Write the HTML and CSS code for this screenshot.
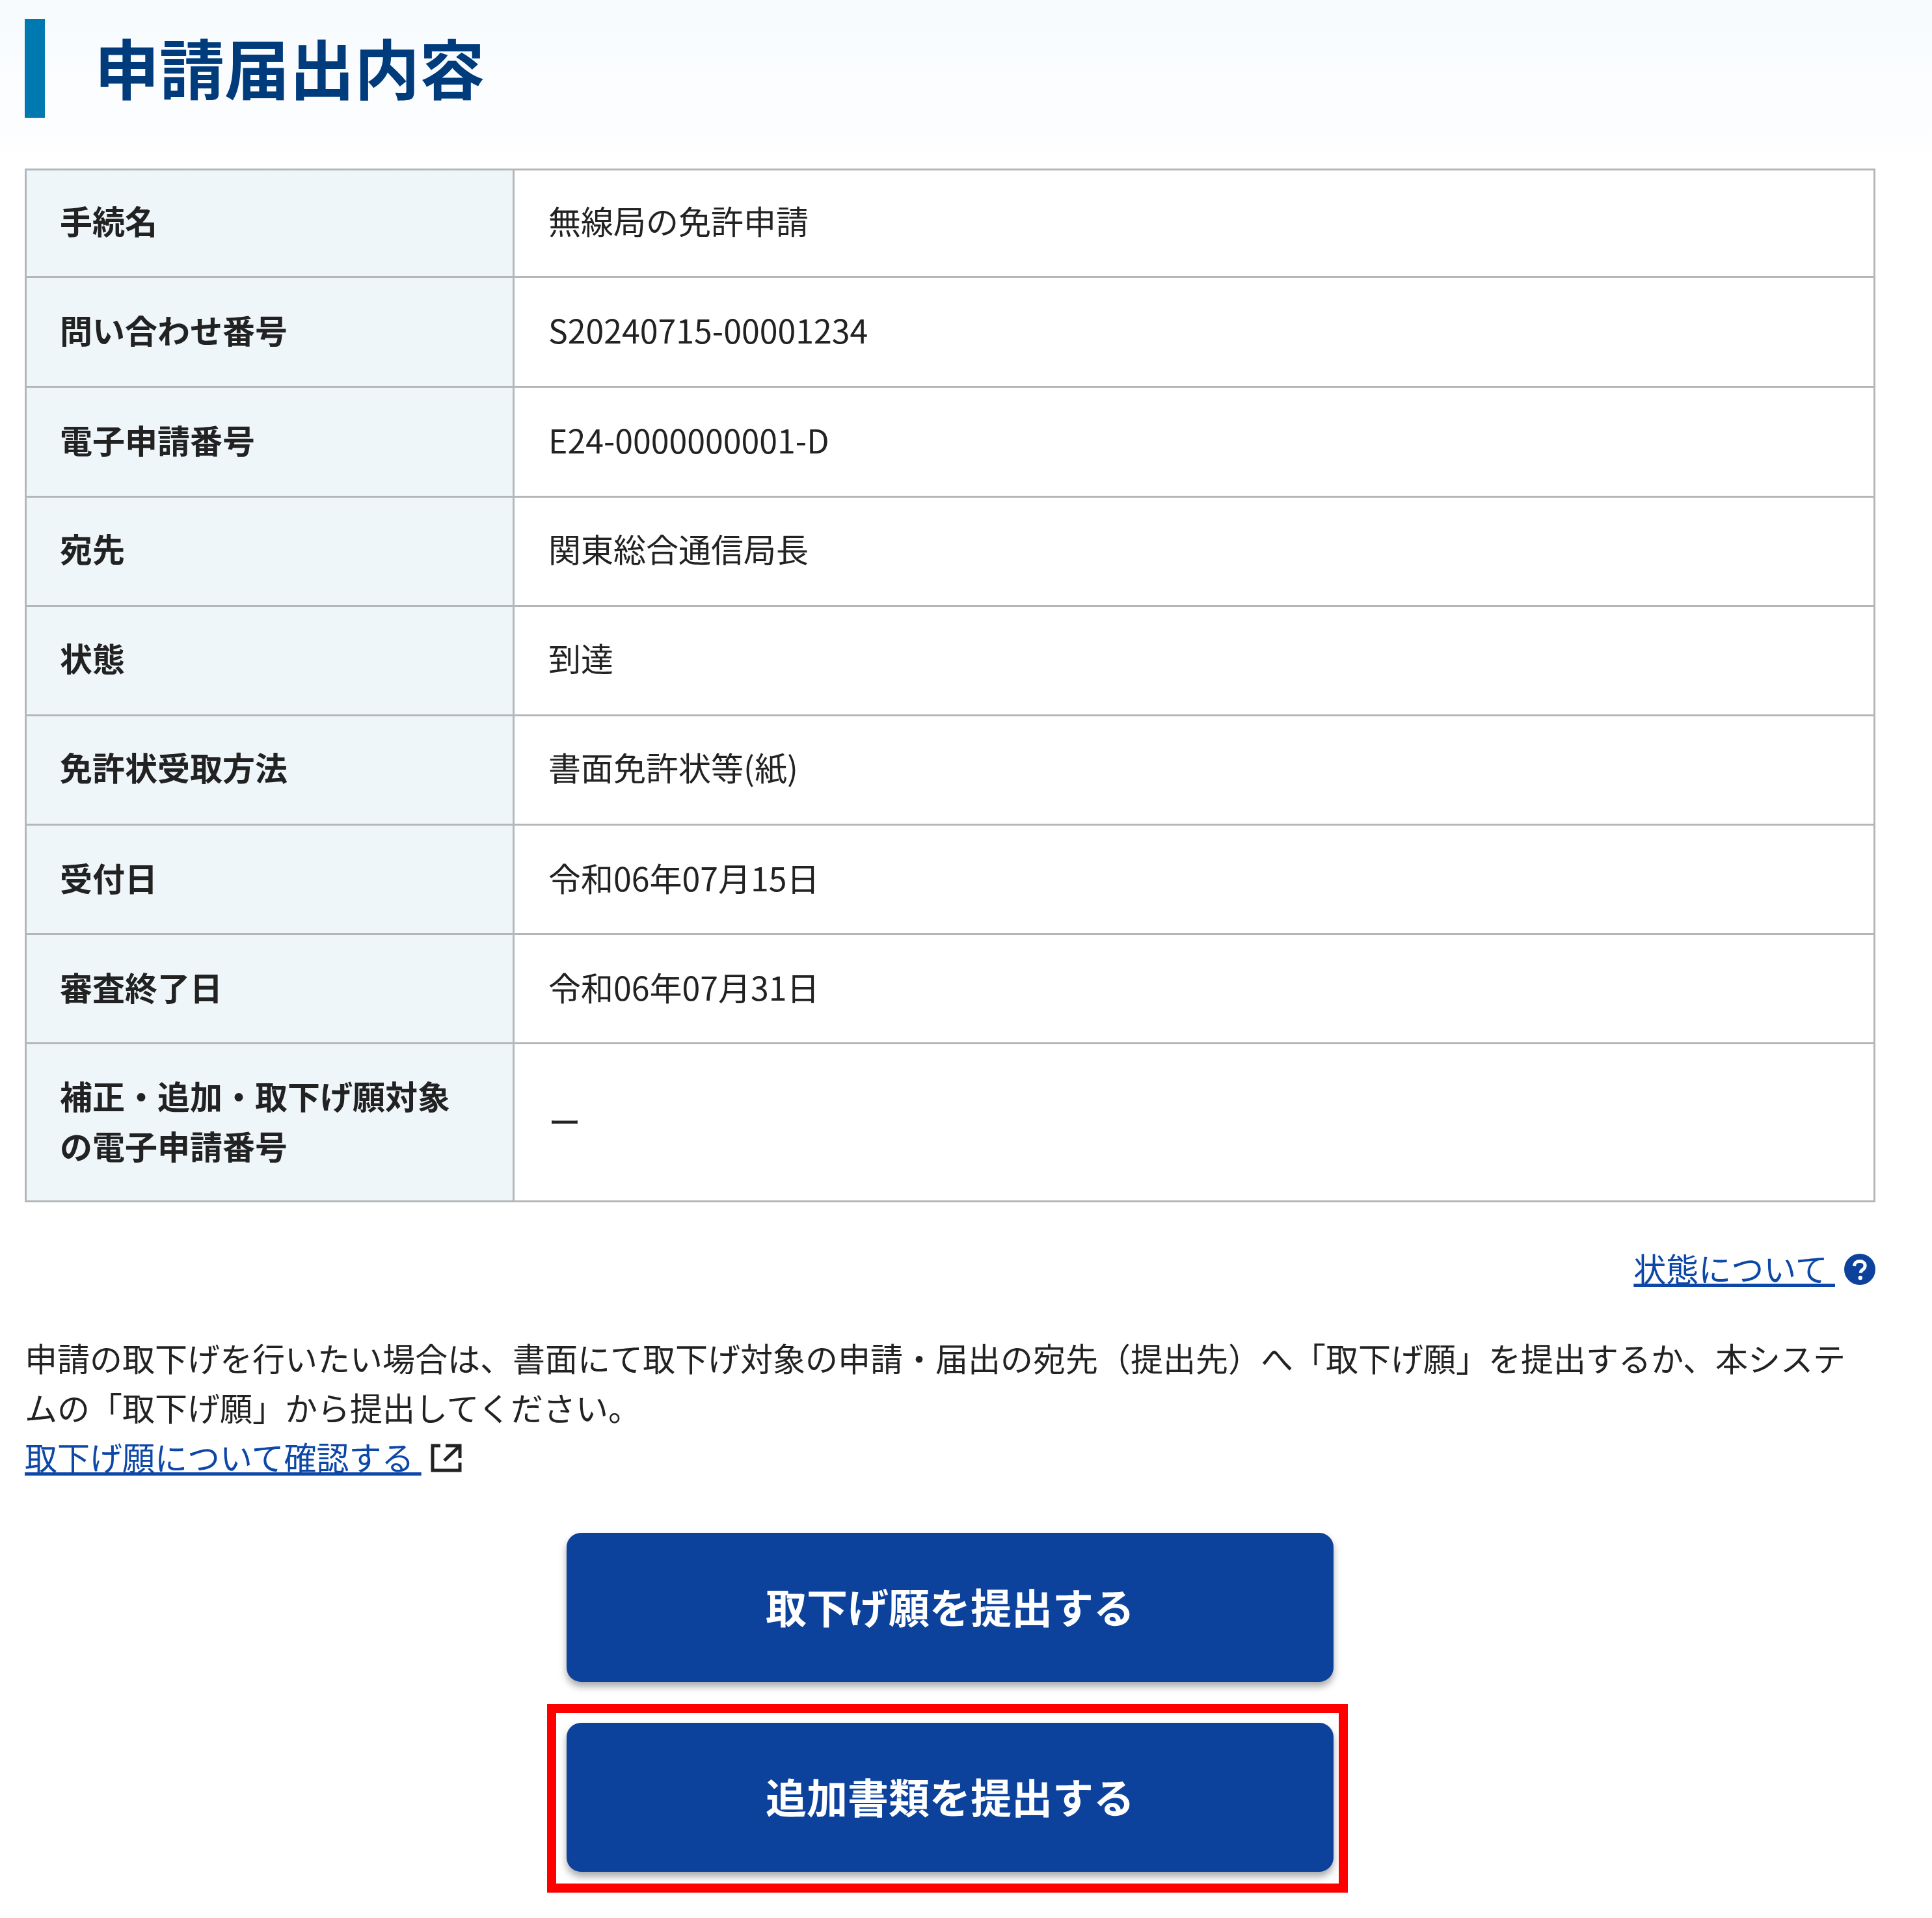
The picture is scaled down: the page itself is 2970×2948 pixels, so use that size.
FILE: index.html
```html
<!DOCTYPE html>
<html lang="ja">
<head>
  <meta charset="UTF-8">
  <title>申請届出内容</title>
  <link rel="stylesheet" href="styles.css">
</head>
<body>
  <main class="page">
    <h1 class="page-title">申請届出内容</h1>

    <table class="detail-table">
      <tr><th>手続名</th><td>無線局の免許申請</td></tr>
      <tr><th>問い合わせ番号</th><td>S20240715-00001234</td></tr>
      <tr><th>電子申請番号</th><td>E24-0000000001-D</td></tr>
      <tr><th>宛先</th><td>関東総合通信局長</td></tr>
      <tr><th>状態</th><td>到達</td></tr>
      <tr><th>免許状受取方法</th><td>書面免許状等(紙)</td></tr>
      <tr><th>受付日</th><td>令和06年07月15日</td></tr>
      <tr><th>審査終了日</th><td>令和06年07月31日</td></tr>
      <tr><th>補正・追加・取下げ願対象<br>の電子申請番号</th><td>ー</td></tr>
    </table>

    <div class="status-help">
      <a href="#" class="link">状態について </a>
      <svg class="icon-help" viewBox="0 0 48 48" aria-hidden="true">
        <circle cx="24" cy="24" r="24" fill="#0d429c"/>
        <path d="M15.5 19c.3-4.8 3.8-7.4 8.4-7.4 4.8 0 8.200 2.800 8.200 6.800 0 3-1.700 4.700-3.800 6.200-2.100 1.500-3 2.600-3 5" fill="none" stroke="#fff" stroke-width="5"/>
        <circle cx="24.800" cy="37" r="3.200" fill="#fff"/>
      </svg>
    </div>

    <p class="notice">
      申請の取下げを行いたい場合は、書面にて取下げ対象の申請・届出の宛先（提出先）へ「取下げ願」を提出するか、本システムの「取下げ願」から提出してください。<br>
      <a href="#" class="link">取下げ願について確認する </a>
      <svg class="icon-external" viewBox="0 0 48 46" aria-hidden="true">
        <path d="M15 4H3v38h42V30M23 4h22v19M45 4 21 27" fill="none" stroke="#222" stroke-width="5"/>
      </svg>
    </p>

    <div class="actions">
      <button class="action-btn">取下げ願を提出する</button>
      <div class="highlighted">
        <button class="action-btn">追加書類を提出する</button>
        <div class="highlight-box"></div>
      </div>
    </div>
  </main>
</body>
</html>
```

FILE: styles.css
```css
* {
  box-sizing: border-box;
}

body {
  margin: 0;
  font-family: "Noto Sans CJK JP", "Noto Sans", sans-serif;
  font-size: 50px;
  color: #222;
  background: linear-gradient(#f7fbfe 0, #fcfdff 180px, #fff 260px) no-repeat;
}

.page {
  padding: 29px 87px 72px 38px;
}

.page-title {
  margin: 0 0 78px;
  padding-left: 76px;
  height: 152px;
  line-height: 146px;
  border-left: 31px solid #0078b0;
  font-size: 100px;
  font-weight: 700;
  color: #003b7c;
}

.detail-table {
  width: 100%;
  border-collapse: collapse;
  table-layout: fixed;
  background: #fff;
}

.detail-table th,
.detail-table td {
  padding: 41px 52px 47px;
  border: 3px solid #b4b7ba;
  line-height: 77px;
  text-align: left;
  font-weight: 400;
}

.detail-table tr:first-child th,
.detail-table tr:first-child td {
  padding-top: 38px;
  padding-bottom: 47px;
}

.detail-table tr:nth-child(2) th,
.detail-table tr:nth-child(2) td,
.detail-table tr:nth-child(3) th,
.detail-table tr:nth-child(3) td {
  padding-bottom: 48px;
}

.detail-table tr:nth-child(4) th,
.detail-table tr:nth-child(4) td,
.detail-table tr:nth-child(5) th,
.detail-table tr:nth-child(5) td,
.detail-table tr:nth-child(6) th,
.detail-table tr:nth-child(6) td {
  padding-top: 39px;
  padding-bottom: 49px;
}

.detail-table tr:last-child th,
.detail-table tr:last-child td {
  padding-top: 40px;
  padding-bottom: 46px;
}

.detail-table th {
  width: 750px;
  padding-left: 51px;
  background: #eff6fa;
  font-weight: 700;
}

.status-help {
  display: flex;
  justify-content: flex-end;
  align-items: center;
  gap: 14px;
  margin-top: 62px;
  height: 76px;
  line-height: 76px;
}

.link {
  color: #0d47a8;
  text-decoration: underline;
  white-space: pre;
}

.icon-help {
  width: 48px;
  height: 48px;
  margin-top: 6px;
}

.notice {
  margin: 62px 0 0;
  line-height: 76px;
}

.icon-external {
  width: 48px;
  height: 46px;
  margin-left: 3px;
  vertical-align: -4px;
}

.actions {
  display: flex;
  flex-direction: column;
  align-items: center;
  gap: 63px;
  margin-top: 80px;
}

.highlighted {
  position: relative;
}

.action-btn {
  display: block;
  width: 1179px;
  height: 229px;
  padding: 0 0 6px;
  border: none;
  border-radius: 22px;
  background: #0d429c;
  color: #fff;
  font-family: inherit;
  font-size: 63px;
  font-weight: 700;
  box-shadow: 0 7px 12px rgba(0, 0, 0, 0.35);
}

.highlight-box {
  position: absolute;
  top: -29px;
  left: -30px;
  right: -22px;
  bottom: -32px;
  border: 14px solid #f00;
}
```
